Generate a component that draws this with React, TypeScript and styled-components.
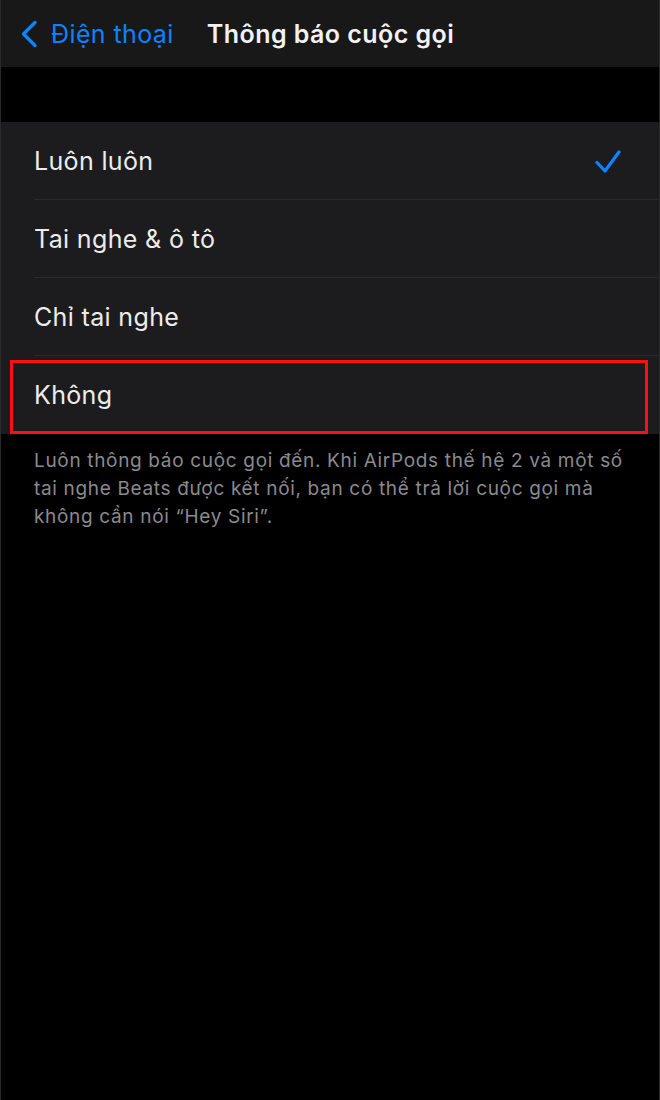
import React from "react";
import styled, { createGlobalStyle } from "styled-components";

const Global = createGlobalStyle`
  html, body { margin: 0; padding: 0; background: #000; }
  body { font-family: Inter, "Noto Sans", "Liberation Sans", sans-serif; -webkit-font-smoothing: antialiased; }
`;

const Screen = styled.div`
  width: 658px;
  min-height: 1100px;
  background: #000;
  border-left: 1px solid #2a2a2a;
  border-right: 1px solid #2a2a2a;
  display: flex;
  flex-direction: column;
`;

const NavBar = styled.header`
  height: 67px;
  background: #181818;
  display: flex;
  align-items: center;
  padding-left: 19px;
  box-sizing: border-box;
`;

const BackButton = styled.div`
  display: flex;
  align-items: center;
  gap: 13px;
  color: #0a84ff;
  font-size: 25px;
  font-weight: 400;
  letter-spacing: 0.4px;
  margin-right: 33px;
`;

const Title = styled.h1`
  margin: 0;
  color: #f2f2f2;
  font-size: 25px;
  font-weight: 600;
  letter-spacing: 0.45px;
`;

const Spacer = styled.div`
  height: 55px;
`;

const List = styled.div`
  background: #1c1c1e;
  display: flex;
  flex-direction: column;
`;

const Row = styled.div<{ $last?: boolean }>`
  position: relative;
  height: 78px;
  display: flex;
  align-items: center;
  padding-left: 33px;
  padding-right: 38px;
  box-sizing: border-box;
  &::after {
    content: "";
    display: ${(p) => (p.$last ? "none" : "block")};
    position: absolute;
    left: 33px;
    right: 0;
    bottom: 0;
    height: 1px;
    background: #2a2a2c;
  }
`;

const RowLabel = styled.span`
  flex: 1;
  color: #ececec;
  font-size: 25px;
  font-weight: 400;
  letter-spacing: 0.35px;
`;

const Highlight = styled.div`
  position: absolute;
  left: 9px;
  right: 11px;
  top: 4px;
  bottom: 0;
  border: 3px solid #ff1010;
  pointer-events: none;
`;

const Footer = styled.p`
  margin: 0;
  padding: 13px 10px 0 33px;
  color: #8a8a8e;
  font-size: 19px;
  line-height: 28px;
  letter-spacing: 0.67px;
  white-space: nowrap;
`;

const Chevron = () => (
  <svg width="18" height="28" viewBox="0 0 18 28">
    <path d="M15 2.5 L3.5 14 L15 25.5" fill="none" stroke="#0a84ff" strokeWidth="3.4" strokeLinecap="round" strokeLinejoin="round" />
  </svg>
);

const Check = () => (
  <svg width="26" height="25" viewBox="0 0 26 25">
    <path d="M2 13.5 L10 22 L24 3" fill="none" stroke="#0a84ff" strokeWidth="3.2" strokeLinecap="round" strokeLinejoin="round" />
  </svg>
);

const options = [
  { label: "Luôn luôn", checked: true },
  { label: "Tai nghe & ô tô" },
  { label: "Chỉ tai nghe" },
  { label: "Không", highlighted: true },
];

export default function App() {
  return (
    <>
      <Global />
      <Screen>
        <NavBar>
          <BackButton>
            <Chevron />
            <span>Điện thoại</span>
          </BackButton>
          <Title>Thông báo cuộc gọi</Title>
        </NavBar>
        <Spacer />
        <List>
          {options.map((o, i) => (
            <Row key={o.label} $last={i === options.length - 1}>
              <RowLabel>{o.label}</RowLabel>
              {o.checked && <Check />}
              {o.highlighted && <Highlight />}
            </Row>
          ))}
        </List>
        <Footer>
          Luôn thông báo cuộc gọi đến. Khi AirPods thế hệ 2 và một số
          <br />
          tai nghe Beats được kết nối, bạn có thể trả lời cuộc gọi mà
          <br />
          không cần nói “Hey Siri”.
        </Footer>
      </Screen>
    </>
  );
}
